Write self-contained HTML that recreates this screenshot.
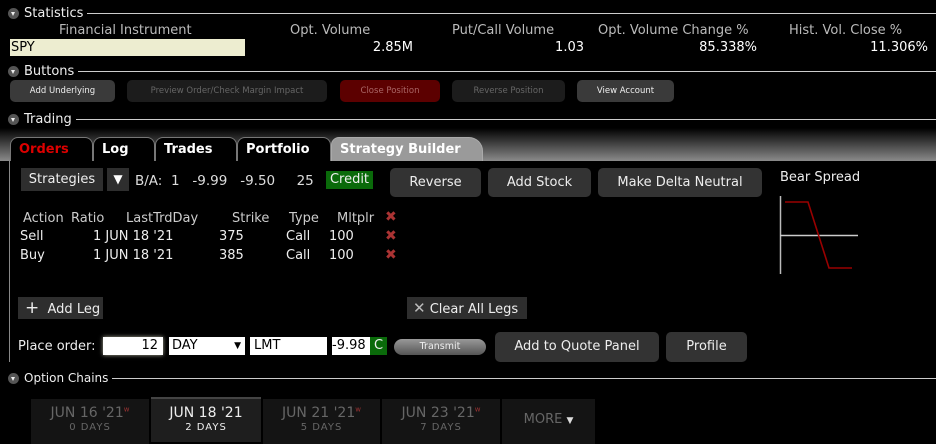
<!DOCTYPE html>
<html><head><meta charset="utf-8"><style>
*{margin:0;padding:0;box-sizing:border-box}
body{width:936px;height:444px;background:#000;color:#ddd;font-family:"DejaVu Sans","Liberation Sans",sans-serif;font-size:12px;position:relative;overflow:hidden}
.a{position:absolute;white-space:nowrap}
.hdr{position:absolute;left:8px;height:14px;display:flex;align-items:center;font-size:13px;color:#eee;width:928px}
.hdr .tri{width:11px;height:11px;border-radius:50%;background:#555;margin-right:5px;position:relative}
.hdr .tri:after{content:"";position:absolute;left:3px;top:4px;border-left:2.5px solid transparent;border-right:2.5px solid transparent;border-top:4px solid #eee}
.hdr .ln{flex:1;height:1px;background:#ccc;margin-left:4px}
.btn{position:absolute;border-radius:5px;text-align:center;font-size:8.5px;line-height:22px;color:#ccc}
.b2{position:absolute;background:#333;border-radius:5px;text-align:center;font-size:13px;color:#eee}
.tab{position:absolute;top:137px;height:24px;background:#000;border:1px solid #777;border-bottom:none;border-radius:8px 8px 0 0;font-weight:bold;font-size:13px;color:#fff;padding:4px 0 0 8px}
.dt{position:absolute;top:399px;height:45px;background:#141414;text-align:center;color:#666;font-size:14px;padding-top:6px}
.dt small{display:block;font-size:10px;letter-spacing:1px;margin-top:1px}
.dt sup{color:#933;font-size:7px}
.x{color:#a33;font-weight:bold;font-size:14px}
.st{font-size:13px;color:#bbb}
</style></head><body>
<div class="hdr" style="top:6px"><div class="tri"></div>Statistics<div class="ln"></div></div>
<div class="a st" style="left:59px;top:23px">Financial Instrument</div>
<div class="a st" style="left:290px;top:23px">Opt. Volume</div>
<div class="a st" style="left:452px;top:23px">Put/Call Volume</div>
<div class="a st" style="left:598px;top:23px">Opt. Volume Change %</div>
<div class="a st" style="left:789px;top:23px">Hist. Vol. Close %</div>
<div class="a" style="left:10px;top:39px;width:235px;height:17px;background:#ededd0;color:#000;padding-left:1px;font-size:13px;line-height:17px">SPY</div>
<div class="a" style="right:523px;top:40px;font-size:13px;color:#fff">2.85M</div>
<div class="a" style="right:352px;top:40px;font-size:13px;color:#fff">1.03</div>
<div class="a" style="right:179px;top:40px;font-size:13px;color:#fff">85.338%</div>
<div class="a" style="right:8px;top:40px;font-size:13px;color:#fff">11.306%</div>
<div class="hdr" style="top:64px"><div class="tri"></div>Buttons<div class="ln"></div></div>
<div class="btn" style="left:10px;top:80px;width:105px;background:#3a3a3a;color:#eee">Add Underlying</div>
<div class="btn" style="left:127px;top:80px;width:200px;background:#1c1c1c;color:#666">Preview Order/Check Margin Impact</div>
<div class="btn" style="left:340px;top:80px;width:100px;background:#5c0000;color:#a66">Close Position</div>
<div class="btn" style="left:452px;top:80px;width:113px;background:#1c1c1c;color:#666">Reverse Position</div>
<div class="btn" style="left:577px;top:80px;width:97px;background:#3a3a3a;color:#eee">View Account</div>
<div class="a" style="left:0;top:128px;width:936px;height:33px;background:linear-gradient(#000,#8a8a8a)"></div>
<div class="hdr" style="top:112px"><div class="tri"></div>Trading<div class="ln"></div></div>
<div class="tab" style="left:10px;width:83px;color:#d00">Orders</div>
<div class="tab" style="left:93px;width:62px">Log</div>
<div class="tab" style="left:155px;width:82px">Trades</div>
<div class="tab" style="left:237px;width:94px">Portfolio</div>
<div class="tab" style="left:331px;width:152px;background:#9a9a9a;border-color:#aaa;border-radius:8px 14px 0 0">Strategy Builder</div>
<div class="a" style="left:9px;top:161px;width:1px;height:201px;background:#888"></div>
<div class="a" style="left:21px;top:168px;width:82px;height:23px;background:#2e2e2e;font-size:13px;line-height:23px;text-align:center;color:#eee">Strategies</div>
<div class="a" style="left:107px;top:168px;width:22px;height:23px;background:#2e2e2e;font-size:12px;line-height:23px;text-align:center;color:#fff">▼</div>
<div class="a" style="left:135px;top:173px;font-size:13.5px;color:#ddd">B/A:&nbsp; 1&nbsp;&nbsp; -9.99&nbsp;&nbsp; -9.50&nbsp;&nbsp;&nbsp;&nbsp; 25</div>
<div class="a" style="left:326px;top:171px;width:47px;height:18px;background:#0a6a0a;font-size:13px;line-height:18px;text-align:center;color:#eee">Credit</div>
<div class="b2" style="left:390px;top:168px;width:91px;height:29px;line-height:29px">Reverse</div>
<div class="b2" style="left:488px;top:168px;width:103px;height:29px;line-height:29px">Add Stock</div>
<div class="b2" style="left:598px;top:168px;width:164px;height:29px;line-height:29px">Make Delta Neutral</div>
<div class="a" style="left:780px;top:170px;font-size:13px;color:#eee">Bear Spread</div>
<svg class="a" style="left:770px;top:190px" width="100" height="90"><line x1="10.5" y1="6" x2="10.5" y2="84" stroke="#bbb" stroke-width="1.5"/><line x1="10" y1="45.5" x2="88" y2="45.5" stroke="#ccc" stroke-width="1.5"/><polyline points="15,12 38,12 59,78 82,78" fill="none" stroke="#900" stroke-width="1.6"/></svg>
<div class="a" style="left:23px;top:211px;font-size:13px;color:#ccc">Action</div>
<div class="a" style="left:71px;top:211px;font-size:13px;color:#ccc">Ratio</div>
<div class="a" style="left:126px;top:211px;font-size:13px;color:#ccc">LastTrdDay</div>
<div class="a" style="left:232px;top:211px;font-size:13px;color:#ccc">Strike</div>
<div class="a" style="left:289px;top:211px;font-size:13px;color:#ccc">Type</div>
<div class="a" style="left:337px;top:211px;font-size:13px;color:#ccc">Mltplr</div>
<div class="a x" style="left:385px;top:209px">✖</div>
<div class="a" style="left:20px;top:227px;font-size:13px;color:#eee;line-height:19px">Sell<br>Buy</div>
<div class="a" style="left:93px;top:227px;font-size:13px;color:#eee;line-height:19px">1&nbsp;JUN 18 '21<br>1&nbsp;JUN 18 '21</div>
<div class="a" style="left:219px;top:227px;font-size:13px;color:#eee;line-height:19px">375<br>385</div>
<div class="a" style="left:286px;top:227px;font-size:13px;color:#eee;line-height:19px">Call<br>Call</div>
<div class="a" style="left:329px;top:227px;font-size:13px;color:#eee;line-height:19px">100<br>100</div>
<div class="a x" style="left:385px;top:227px;line-height:19px">✖<br>✖</div>
<div class="a" style="left:18px;top:297px;width:85px;height:22px;background:#2e2e2e;font-size:13px;line-height:22px;color:#eee;padding-left:7px"><span style="font-size:17px">+</span>&nbsp; Add Leg</div>
<div class="a" style="left:407px;top:297px;width:120px;height:22px;background:#2e2e2e;font-size:13px;line-height:22px;color:#eee;padding-left:6px"><span style="font-size:15px;color:#bbb">✕</span>&nbsp;Clear All Legs</div>
<div class="a" style="left:18px;top:339px;font-size:13px;color:#eee">Place order:</div>
<div class="a" style="left:103px;top:337px;width:60px;height:18px;background:#fff;color:#000;text-align:right;padding-right:5px;font-size:13px;line-height:18px;box-shadow:0 0 4px #aa9">12</div>
<div class="a" style="left:169px;top:337px;width:76px;height:18px;background:#fff;color:#000;font-size:13px;line-height:18px;padding-left:3px">DAY<span style="position:absolute;right:4px;font-size:9px">▼</span></div>
<div class="a" style="left:250px;top:337px;width:77px;height:18px;background:#fff;color:#000;font-size:13px;line-height:18px;padding-left:4px">LMT</div>
<div class="a" style="left:332px;top:337px;width:38px;height:18px;background:#fff;color:#000;font-size:13px;line-height:18px">-9.98</div>
<div class="a" style="left:370px;top:337px;width:17px;height:18px;background:#0a6a0a;color:#eee;font-size:13px;line-height:18px;text-align:center">C</div>
<div class="a" style="left:394px;top:339px;width:92px;height:16px;background:linear-gradient(#999,#555);border-radius:8px;color:#eee;font-size:9.5px;line-height:16px;text-align:center">Transmit</div>
<div class="b2" style="left:495px;top:332px;width:164px;height:30px;line-height:30px">Add to Quote Panel</div>
<div class="b2" style="left:666px;top:332px;width:81px;height:30px;line-height:30px">Profile</div>
<div class="hdr" style="top:371px;font-size:12px"><div class="tri"></div>Option Chains<div class="ln"></div></div>
<div class="dt" style="left:31px;width:118px">JUN 16 '21<sup>w</sup><small>0 DAYS</small></div>
<div class="dt" style="left:151px;width:110px;background:#1e1e1e;border-top:2px solid #444;top:397px;color:#eee">JUN 18 '21<small>2 DAYS</small></div>
<div class="dt" style="left:263px;width:117px">JUN 21 '21<sup>w</sup><small>5 DAYS</small></div>
<div class="dt" style="left:382px;width:118px">JUN 23 '21<sup>w</sup><small>7 DAYS</small></div>
<div class="dt" style="left:502px;width:93px;padding-top:13px;font-size:13px">MORE <span style="color:#ddd;font-size:9px">▼</span></div>
</body></html>
